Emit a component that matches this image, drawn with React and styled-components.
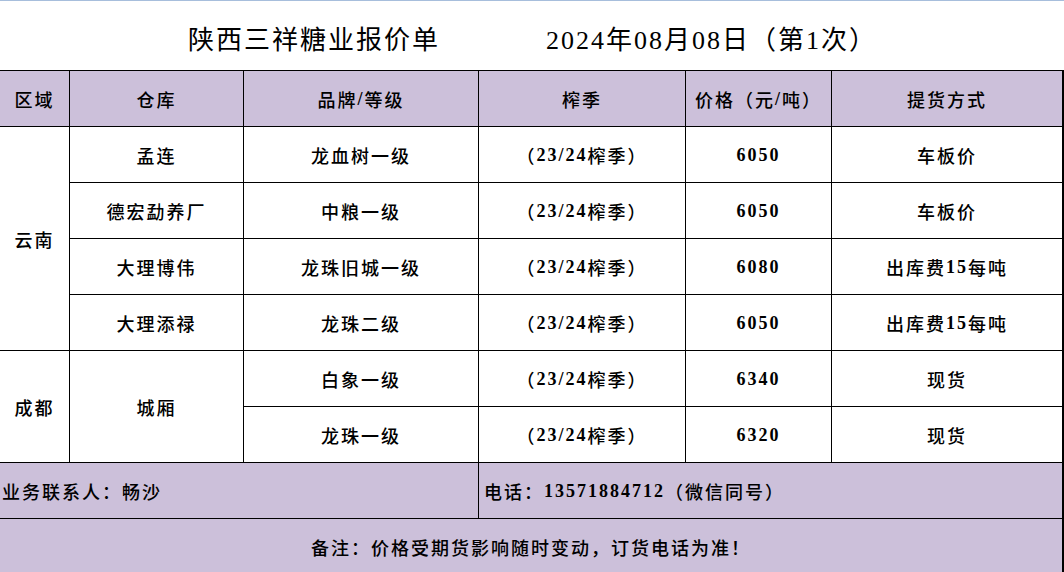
import React from 'react';
import styled, { createGlobalStyle } from 'styled-components';

const GlobalStyle = createGlobalStyle`
  html, body {
    margin: 0;
    padding: 0;
    background: #ffffff;
  }
  body {
    font-family: "Liberation Serif", "Noto Sans CJK SC", serif;
    color: #000;
  }
`;

const rows = [
  { store: '孟连', brand: '龙血树一级', price: '6050', pick: '车板价' },
  { store: '德宏勐养厂', brand: '中粮一级', price: '6050', pick: '车板价' },
  { store: '大理博伟', brand: '龙珠旧城一级', price: '6080', pick: '出库费15每吨' },
  { store: '大理添禄', brand: '龙珠二级', price: '6050', pick: '出库费15每吨' },
];

const chengdu = [
  { brand: '白象一级', price: '6340', pick: '现货' },
  { brand: '龙珠一级', price: '6320', pick: '现货' },
];

// digits in the sheet are a heavier serif than the chinese text
const Txt = ({ children }) =>
  String(children)
    .split(/([0-9/]+)/)
    .map((part, i) => (i % 2 ? <Num key={i}>{part}</Num> : part));

const App = () => {
  return (
    <>
      <GlobalStyle />
      <Sheet>
        <TitleBar>
          <Title>陕西三祥糖业报价单</Title>
          <Title>2024年08月08日（第1次）</Title>
        </TitleBar>
        <Table>
          <Cell head>区域</Cell>
          <Cell head>仓库</Cell>
          <Cell head><Txt>品牌/等级</Txt></Cell>
          <Cell head>榨季</Cell>
          <Cell head><Txt>价格（元/吨）</Txt></Cell>
          <Cell head>提货方式</Cell>

          <Cell rows={4}>云南</Cell>
          {rows.map((r) => (
            <React.Fragment key={r.store}>
              <Cell>{r.store}</Cell>
              <Cell>{r.brand}</Cell>
              <Cell><Txt>（23/24榨季）</Txt></Cell>
              <Cell><Txt>{r.price}</Txt></Cell>
              <Cell><Txt>{r.pick}</Txt></Cell>
            </React.Fragment>
          ))}

          <Cell rows={2}>成都</Cell>
          <Cell rows={2}>城厢</Cell>
          {chengdu.map((r) => (
            <React.Fragment key={r.brand}>
              <Cell>{r.brand}</Cell>
              <Cell><Txt>（23/24榨季）</Txt></Cell>
              <Cell><Txt>{r.price}</Txt></Cell>
              <Cell>{r.pick}</Cell>
            </React.Fragment>
          ))}

          <Cell head cols={3} left pad={2}>业务联系人：畅沙</Cell>
          <Cell head cols={3} left pad={5}><Txt>电话：13571884712（微信同号）</Txt></Cell>

          <Cell head cols={6}>备注：价格受期货影响随时变动，订货电话为准！</Cell>
        </Table>
      </Sheet>
    </>
  );
};

const Sheet = styled.div`
  width: 1064px;
  height: 572px;
  overflow: hidden;
  background: #fff;
`;

const TitleBar = styled.div`
  width: 1062px;
  height: 69px;
  border-top: 1px solid #a7bedc;
  border-right: 1px solid #d4dbe6;
  display: flex;
  align-items: center;
  gap: 106px;
  padding-left: 188px;
  box-sizing: content-box;
`;

const Title = styled.div`
  font-size: 26px;
  letter-spacing: 2px;
  white-space: nowrap;
  padding-top: 4px;
`;

const Table = styled.div`
  display: grid;
  width: 1063px;
  grid-template-columns: 69px 173px 234px 206px 145px 230px;
  grid-auto-rows: 55px;
  gap: 1px;
  background: #000;
  border-top: 1px solid #000;
  border-right: 1px solid #000;
`;

const Cell = styled.div`
  background: ${(p) => (p.head ? '#ccc0da' : '#ffffff')};
  grid-row: ${(p) => (p.rows ? `span ${p.rows}` : 'auto')};
  grid-column: ${(p) => (p.cols ? `span ${p.cols}` : 'auto')};
  display: flex;
  align-items: center;
  justify-content: ${(p) => (p.left ? 'flex-start' : 'center')};
  padding-left: ${(p) => (p.left ? `${p.pad}px` : '0')};
  font-size: 18px;
  font-weight: 500;
  letter-spacing: 2px;
  white-space: nowrap;
`;

const Num = styled.span`
  font-weight: 700;
  position: relative;
  top: 1px;
`;

export default App;
